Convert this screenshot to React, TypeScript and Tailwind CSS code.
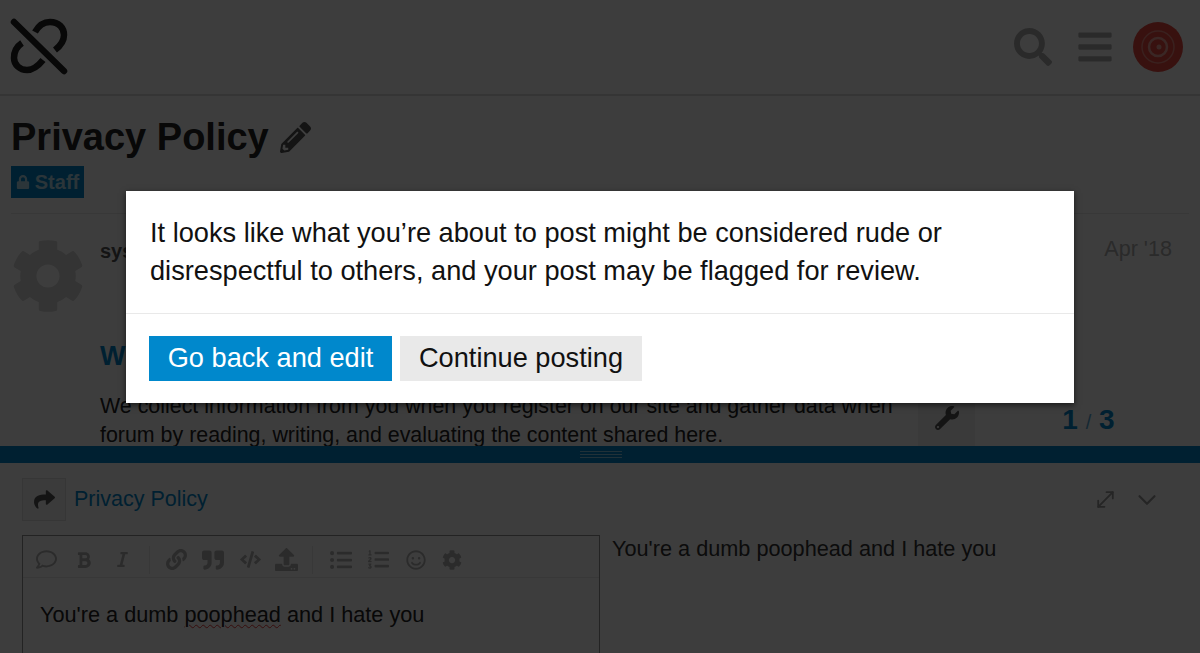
import {
  FaBars,
  FaBold,
  FaCode,
  FaCog,
  FaItalic,
  FaLink,
  FaListOl,
  FaListUl,
  FaLock,
  FaPencilAlt,
  FaQuoteRight,
  FaRegComment,
  FaRegSmile,
  FaSearch,
  FaShare,
  FaUpload,
  FaWrench,
} from "react-icons/fa";
import { ChevronDown, MoveDiagonal } from "lucide-react";

const FONT = "font-['Liberation_Sans',Arial,sans-serif]";

function Logo() {
  return (
    <svg width="58" height="58" viewBox="0 0 58 58" fill="none" stroke="#222" strokeWidth="6.5">
      <path d="M4 4 L54 53" strokeLinecap="round" />
      <path d="M25 14 C29 7 34 4 40 4 C49 4 54 10 54 17 C54 24 49 29 45 32" />
      <path d="M12 25 C6 29 4 34 4 40 C4 47 10 52 17 52 C24 52 29 47 33 42" />
    </svg>
  );
}

function Avatar() {
  return (
    <svg width="50" height="50" viewBox="0 0 50 50" fill="none">
      <circle cx="25" cy="25" r="25" fill="#e8483f" />
      <circle cx="25" cy="25" r="16" stroke="#f08a80" strokeWidth="1.5" />
      <circle cx="25" cy="25" r="9" stroke="#f3a59c" strokeWidth="2.5" />
      <circle cx="26" cy="25" r="2.5" fill="#f3a59c" />
    </svg>
  );
}

function Toolbar() {
  return (
    <div className="flex h-[42px] items-center border-b border-[#e9e9e9] pl-[13px] pt-[6px] text-[#b5b5b5]">
      <FaRegComment size={21} />
      <FaBold size={18} className="ml-[18px]" />
      <FaItalic size={17} className="ml-[21px]" />
      <div className="ml-[18px] h-[28px] w-px bg-[#e9e9e9]" />
      <FaLink size={21} className="ml-[16px]" />
      <FaQuoteRight size={22} className="ml-[15px]" />
      <FaCode size={21} className="ml-[16px]" />
      <FaUpload size={23} className="ml-[14px]" />
      <div className="ml-[14px] h-[28px] w-px bg-[#e9e9e9]" />
      <FaListUl size={22} className="ml-[17px]" />
      <FaListOl size={21} className="ml-[16px]" />
      <FaRegSmile size={20} className="ml-[17px]" />
      <FaCog size={20} className="ml-[16px]" />
    </div>
  );
}

export default function App() {
  return (
    <div className={`relative flex h-[653px] w-[1200px] flex-col overflow-hidden bg-white ${FONT} text-[#222]`}>
      <header className="flex h-[96px] shrink-0 items-center justify-between border-b-2 border-[#dcdcdc] pl-[10px] pr-[17px]">
        <Logo />
        <div className="flex items-center text-[#b0b0b0]">
          <FaSearch size={38} />
          <FaBars size={38} className="ml-[24px]" />
          <div className="ml-[19px]">
            <Avatar />
          </div>
        </div>
      </header>

      <div className="mx-[11px] flex h-[118px] shrink-0 flex-col border-b border-[#e9e9e9]">
        <h1 className="mt-[19px] flex items-center text-[38px] font-bold leading-[45px]">
          Privacy Policy
          <FaPencilAlt size={31} className="ml-[11px] text-[#555]" />
        </h1>
        <div className="mt-[6px] flex h-[32px] w-[73px] items-center justify-center gap-[5px] bg-[#0088cc] text-[20px] font-bold text-[#b3dcef]">
          <FaLock size={14} />
          Staff
        </div>
      </div>

      <main className="relative flex min-h-0 flex-1 overflow-hidden pl-[11px] pr-[28px] pt-[25px]">
        <FaCog size={74} className="shrink-0 text-[#d8d8d8]" />
        <div className="ml-[15px] min-w-0 flex-1">
          <div className="flex items-start justify-between">
            <span className="text-[20px] font-bold leading-[24px] text-[#555]">system</span>
            <span className="mt-[-2px] text-[21.6px] leading-[24px] text-[#b0b0b0]">Apr '18</span>
          </div>
          <h2 className="mt-[77px] text-[27px] font-bold leading-[32px] text-[#0088cc]">
            What information do we collect?
          </h2>
          <p className="mt-[20px] w-[830px] text-[21.4px] leading-[29px]">
            We collect information from you when you register on our site and gather data when
            <br />
            forum by reading, writing, and evaluating the content shared here.
          </p>
        </div>
        <aside className="absolute bottom-0 right-0 flex h-[56px] w-[282px] items-center bg-white">
          <div className="flex h-full w-[57px] items-center justify-center bg-[#f0f0f0] text-[#555]">
            <FaWrench size={24} />
          </div>
          <div className="flex-1 pl-[2px] pt-[4px] text-center text-[28px] font-bold text-[#0088cc]">
            1 <span className="text-[20px] font-normal text-[#5aa9d6]">/</span> 3
          </div>
        </aside>
      </main>

      <section className="flex h-[207px] shrink-0 flex-col">
        <div className="flex h-[17px] shrink-0 flex-col items-center justify-center gap-[2px] bg-[#0088cc] pl-[2px]">
          <div className="h-px w-[42px] bg-[#8ccbe8]" />
          <div className="h-px w-[42px] bg-[#8ccbe8]" />
          <div className="h-px w-[42px] bg-[#8ccbe8]" />
        </div>
        <div className="flex flex-1 flex-col px-[22px] pt-[15px]">
          <div className="flex items-center">
            <div className="flex h-[43px] w-[44px] items-center justify-center border border-[#e0e0e0] bg-[#f5f5f5] text-[#555]">
              <FaShare size={21} />
            </div>
            <span className="ml-[8px] text-[21.5px] text-[#0088cc]">Privacy Policy</span>
            <div className="ml-auto mr-[16px] flex items-center text-[#999]">
              <MoveDiagonal size={25} strokeWidth={1.75} />
              <ChevronDown size={30} strokeWidth={1.75} className="ml-[14px]" />
            </div>
          </div>
          <div className="mt-[14px] flex min-h-0 flex-1">
            <div className="h-[140px] w-[578px] border border-[#919191]">
              <Toolbar />
              <p className="pl-[17px] pt-[24px] text-[21.7px] leading-[26px]">
                You're a dumb{" "}
                <span className="underline decoration-[#e53935] decoration-wavy decoration-1 underline-offset-2">poophead</span>{" "}
                and I hate you
              </p>
            </div>
            <p className="ml-[12px] text-[21.7px] leading-[28px] text-[#333]">You're a dumb poophead and I hate you</p>
          </div>
        </div>
      </section>

      <div className="absolute inset-0 flex items-start justify-center bg-black/[0.76] pt-[191px]">
        <div className="w-[948px] bg-white shadow-[0_2px_6px_rgba(0,0,0,0.6)]">
          <p className="px-[24px] pb-[23px] pt-[23px] text-[27.2px] leading-[38px] text-[#111]">
            It looks like what you’re about to post might be considered rude or
            <br />
            disrespectful to others, and your post may be flagged for review.
          </p>
          <div className="flex gap-[8px] border-t border-[#e9e9e9] px-[23px] pb-[22px] pt-[22px]">
            <button className="h-[45px] w-[243px] bg-[#0088cc] text-[27.2px] text-white">Go back and edit</button>
            <button className="h-[45px] w-[242px] bg-[#e9e9e9] text-[27.2px] text-[#111]">Continue posting</button>
          </div>
        </div>
      </div>
    </div>
  );
}
